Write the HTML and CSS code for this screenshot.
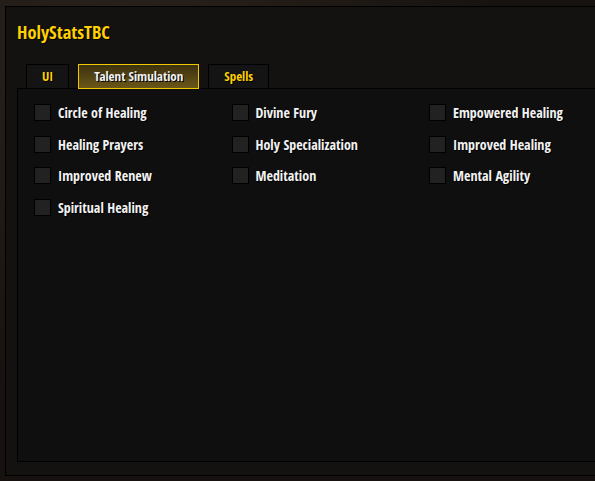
FILE: index.html
```html
<!DOCTYPE html>
<html lang="en">
<head>
  <meta charset="UTF-8" />
  <meta name="viewport" content="width=device-width, initial-scale=1.0" />
  <title>HolyStatsTBC</title>
  <link rel="stylesheet" href="styles.css">
</head>
<body>
  <div class="frame">
    <h1 class="title">HolyStatsTBC</h1>
    <div class="tabs">
      <div class="tab">UI</div>
      <div class="tab active">Talent Simulation</div>
      <div class="tab">Spells</div>
    </div>
    <div class="panel">
      <div class="talents">
        <label class="talent"><span class="box"></span>Circle of Healing</label>
        <label class="talent"><span class="box"></span>Divine Fury</label>
        <label class="talent"><span class="box"></span>Empowered Healing</label>
        <label class="talent"><span class="box"></span>Healing Prayers</label>
        <label class="talent"><span class="box"></span>Holy Specialization</label>
        <label class="talent"><span class="box"></span>Improved Healing</label>
        <label class="talent"><span class="box"></span>Improved Renew</label>
        <label class="talent"><span class="box"></span>Meditation</label>
        <label class="talent"><span class="box"></span>Mental Agility</label>
        <label class="talent"><span class="box"></span>Spiritual Healing</label>
      </div>
    </div>
  </div>
</body>
</html>
```

FILE: styles.css
```css
html, body {
  margin: 0;
  height: 100%;
  overflow: hidden;
}
body {
  font-family: 'Open Sans Condensed', 'Roboto Condensed', sans-serif;
  font-weight: bold;
  font-stretch: condensed;
  background: radial-gradient(ellipse at 20% 10%, #2a221c, #17120f 60%);
  padding: 6px 0 0 5px;
}
.frame {
  width: 640px;
  height: 468px;
  border: 1px solid #000;
  background-color: #131211;
}
.title {
  margin: 0;
  padding: 14px 0 0 11px;
  height: 43px;
  font-size: 18.4px;
  line-height: 22px;
  color: #ffd100;
  text-shadow: 1px 1px 0 #000;
}
.tabs {
  display: flex;
  gap: 9px;
  padding-left: 20px;
  position: relative;
  z-index: 1;
}
.tab {
  height: 23px;
  line-height: 23px;
  padding: 0 15px;
  border: 1px solid #000;
  background-color: #141414;
  color: #ffd100;
  font-size: 13px;
  text-shadow: 1px 1px 0 #000;
}
.tab.active {
  border-color: #f0c800;
  background: linear-gradient(#3d3210, #6a5618);
  color: #f2f2f2;
}
.panel {
  margin: -1px 0 0 11px;
  height: 372px;
  border: 1px solid #000;
  background-color: #0f0f0f;
}
.talents {
  display: grid;
  grid-template-columns: repeat(3, 197.5px);
  grid-auto-rows: 31.7px;
  padding: 15px 0 0 16px;
}
.talent {
  display: flex;
  align-items: flex-start;
  gap: 7px;
  color: #f2f2f2;
  font-size: 14px;
  line-height: 17px;
  text-shadow: 1px 1px 0 #000;
}
.box {
  width: 15px;
  height: 15px;
  border: 1px solid #000;
  background-color: #222;
  flex-shrink: 0;
}
```
